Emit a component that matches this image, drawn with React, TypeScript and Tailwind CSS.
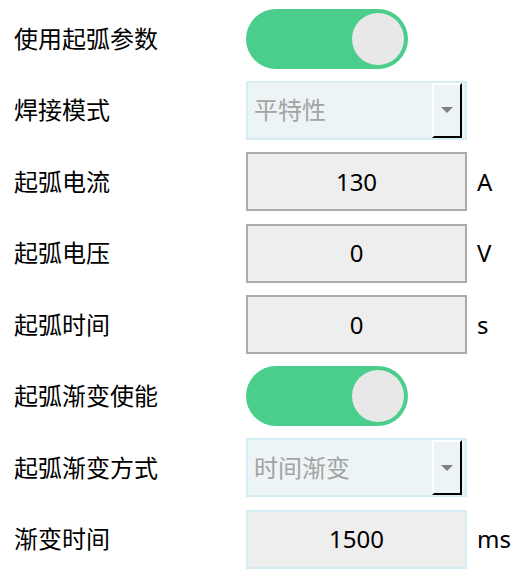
const FONT = 'font-["Noto_Sans","Noto_Sans_CJK_SC",sans-serif]'

function Toggle() {
  return (
    <div className="w-[162px] h-[60px] rounded-full bg-[#4bce8b] flex items-center justify-end pr-[4px]">
      <div className="w-[52px] h-[52px] rounded-full bg-[#e8e8e8]" />
    </div>
  )
}

function Select({ value }: { value: string }) {
  return (
    <div className="w-[221px] h-[59px] border-2 border-[#d7edf4] bg-[#edf4f6] flex items-center pl-[6px] pr-[3px]">
      <span className="flex-1 text-[24px] text-[#a3a3a3]">{value}</span>
      <div className="w-[30px] h-[55px] border-t-2 border-l-2 border-t-white border-l-white border-r-2 border-b-2 border-r-black border-b-black flex items-center justify-center">
        <div className="w-0 h-0 border-l-[6px] border-r-[6px] border-t-[6px] border-l-transparent border-r-transparent border-t-[#808080]" />
      </div>
    </div>
  )
}

function NumInput({ value, focused }: { value: string; focused?: boolean }) {
  return (
    <div
      className={`w-[221px] h-[59px] border-2 bg-[#eeeeee] flex items-center justify-center text-[24px] text-black ${
        focused ? 'border-[#d7edf4]' : 'border-[#ababab]'
      }`}
    >
      {value}
    </div>
  )
}

type Row = { label: string; kind: 'toggle' | 'select' | 'input'; value?: string; unit?: string; focused?: boolean }

const ROWS: Row[] = [
  { label: '使用起弧参数', kind: 'toggle' },
  { label: '焊接模式', kind: 'select', value: '平特性' },
  { label: '起弧电流', kind: 'input', value: '130', unit: 'A' },
  { label: '起弧电压', kind: 'input', value: '0', unit: 'V' },
  { label: '起弧时间', kind: 'input', value: '0', unit: 's' },
  { label: '起弧渐变使能', kind: 'toggle' },
  { label: '起弧渐变方式', kind: 'select', value: '时间渐变' },
  { label: '渐变时间', kind: 'input', value: '1500', unit: 'ms', focused: true },
]

export default function App() {
  return (
    <div className={`w-[522px] h-[583px] bg-white pt-[3px] ${FONT}`}>
      {ROWS.map((r) => (
        <div key={r.label} className="h-[71.5px] flex items-center">
          <div className="w-[246px] pl-[14px] text-[24px] text-black leading-none">{r.label}</div>
          {r.kind === 'toggle' && <Toggle />}
          {r.kind === 'select' && <Select value={r.value!} />}
          {r.kind === 'input' && <NumInput value={r.value!} focused={r.focused} />}
          {r.unit && <span className="ml-[10px] text-[24px] text-black">{r.unit}</span>}
        </div>
      ))}
    </div>
  )
}
